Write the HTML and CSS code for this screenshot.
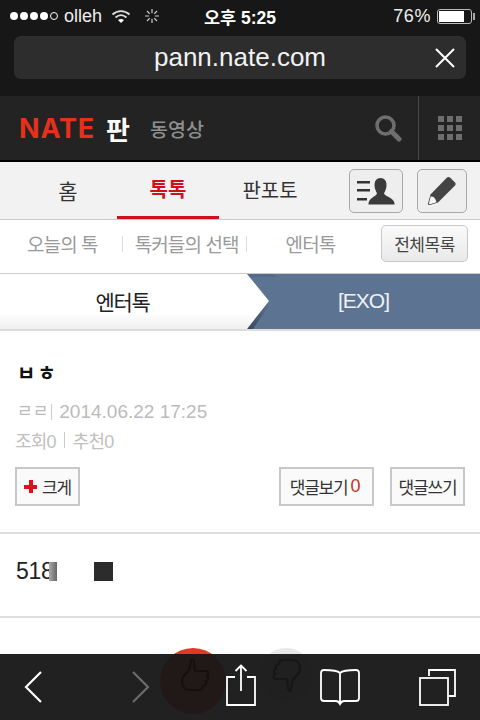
FILE: index.html
```html
<!DOCTYPE html>
<html lang="ko">
<head>
    <meta charset="UTF-8">
    <meta name="viewport" content="width=device-width, initial-scale=1.0">
    <title>pann.nate.com</title>
    <link rel="stylesheet" href="styles.css">
</head>
<body>
    <div class="phone">
        <!-- Safari top -->
        <div class="browser-top">
            <div class="status-bar">
                <div class="status-left">
                    <span class="dots"><i></i><i></i><i></i><i></i><i class="off"></i></span>
                    <span class="carrier">olleh</span>
                    <svg class="wifi" width="20" height="15" viewBox="0 0 20 15">
                        <path d="M1.5 5.5C6.5 1 13.500 1 18.500 5.500" fill="none" stroke="#ddd" stroke-width="1.800"/>
                        <path d="M4.500 8.500C8 5.500 12 5.500 15.500 8.500" fill="none" stroke="#ddd" stroke-width="1.800"/>
                        <path d="M7 11C9 9.500 11 9.500 13 11L10 14Z" fill="#fff"/>
                    </svg>
                    <svg class="spinner" width="16" height="16" viewBox="0 0 16 16" stroke="#ccc" stroke-width="1.200">
                        <path d="M8 1V5M8 11V15M1 8H5M11 8H15M3 3L5.800 5.800M10.200 10.200L13 13M13 3L10.200 5.800M5.800 10.200L3 13"/>
                    </svg>
                </div>
                <div class="clock">오후 5:25</div>
                <div class="status-right">
                    <span>76%</span>
                    <span class="battery"><b></b></span>
                </div>
            </div>
            <div class="url-bar">
                <span>pann.nate.com</span>
                <svg class="url-close" width="22" height="22" viewBox="0 0 22 22">
                    <path d="M2 2L20 20M20 2L2 20" stroke="#fff" stroke-width="2"/>
                </svg>
            </div>
        </div>

        <!-- Site header -->
        <header class="site-header">
            <div class="logo">NATE</div>
            <div class="logo-pann">판</div>
            <div class="logo-sub">동영상</div>
            <svg class="search" width="28" height="28" viewBox="0 0 28 28">
                <circle cx="11.500" cy="11.500" r="8.500" fill="none" stroke="#6e6e6e" stroke-width="3.600"/>
                <path d="M17.500 17.500L25 25" stroke="#6e6e6e" stroke-width="5" stroke-linecap="round"/>
            </svg>
            <div class="apps">
                <div class="apps-grid"><i></i><i></i><i></i><i></i><i></i><i></i><i></i><i></i><i></i></div>
            </div>
        </header>

        <!-- Main tabs -->
        <nav class="tabs">
            <a class="tab">홈</a>
            <a class="tab active">톡톡</a>
            <a class="tab">판포토</a>
            <button class="icon-btn profile-btn">
                <svg width="40" height="32" viewBox="0 0 40 32">
                    <path d="M1 6H14V8.500H1ZM1 14H14V16.500H1ZM1 23H11V25.500H1Z" fill="#333"/>
                    <path d="M24.500 3C28.500 3 30.500 6 30.500 10C30.500 14 29 16 28 18.500C29 21.500 37 22 38.500 28V29.500H12.500V28C14 22 20 21.500 21 18.500C20 16 18.500 14 18.500 10C18.500 6 20.500 3 24.500 3Z" fill="#3a3a3a"/>
                </svg>
            </button>
            <button class="icon-btn pencil-btn">
                <svg width="30" height="30" viewBox="0 0 30 30">
                    <path d="M20 1.500Q21.500 0.500 23 1.500L28 6.500Q29.500 8 28 9.500L11 26.500L3 29Q0.800 29.500 1 27.500L3.500 18.500Z" fill="#444"/>
                    <path d="M3.700 20.500Q8 20 9.500 26.200L3 28.200Q1.700 28.300 2 27Z" fill="#f4f4f4"/>
                </svg>
            </button>
        </nav>

        <!-- Sub nav -->
        <nav class="subnav">
            <a class="sub-item sub-today">오늘의 톡</a>
            <span class="sub-sep"></span>
            <a class="sub-item sub-pick">톡커들의 선택</a>
            <span class="sub-sep"></span>
            <a class="sub-item sub-enter">엔터톡</a>
            <button class="all-btn">전체목록</button>
        </nav>

        <!-- Breadcrumb -->
        <div class="crumbs">
            <div class="crumb-first">엔터톡</div>
            <div class="crumb-last">[EXO]</div>
            <svg class="crumb-arrow" width="32" height="55" viewBox="0 0 32 55">
                <defs>
                    <linearGradient id="arrowFill" x1="0" y1="0" x2="0" y2="1">
                        <stop offset="0.7" stop-color="#fff"/>
                        <stop offset="1" stop-color="#efefef"/>
                    </linearGradient>
                    <linearGradient id="arrowShade" x1="0" y1="1" x2="1" y2="0.400">
                        <stop offset="0" stop-color="#24303f" stop-opacity="0.7"/>
                        <stop offset="1" stop-color="#24303f" stop-opacity="0"/>
                    </linearGradient>
                </defs>
                <path d="M22 27L0 55H6L25 28Z" fill="url(#arrowShade)"/>
                <path d="M0 0H26L30 3H4ZM4 0L22 27" fill="#4e647f" opacity="0.6"/>
                <path d="M0 0L22 27L0 55Z" fill="url(#arrowFill)"/>
            </svg>
        </div>

        <!-- Post -->
        <main class="post">
            <section class="post-head">
                <h1 class="post-title">ㅂㅎ</h1>
                <p class="post-meta"><span class="author">ㄹㄹ</span><span class="bar"></span><span class="date">2014.06.22 17:25</span></p>
                <p class="post-count"><span>조회0</span><span class="bar"></span><span>추천0</span></p>
                <div class="post-actions">
                    <button class="act-btn big-btn"><span class="plus"></span>크게</button>
                    <button class="act-btn view-btn">댓글보기<em>0</em></button>
                    <button class="act-btn write-btn">댓글쓰기</button>
                </div>
            </section>
            <section class="post-body">
                <span class="num">518</span><span class="broken"></span><span class="square"></span>
            </section>
        </main>

        <!-- Vote buttons, mostly under the toolbar -->
        <div class="vote vote-up"></div>
        <div class="vote vote-down"></div>

        <!-- Safari bottom -->
        <footer class="toolbar">
            <svg class="tool" width="24" height="36" viewBox="0 0 24 36">
                <path d="M20 3L5 18L20 33" fill="none" stroke="#fff" stroke-width="2.200"/>
            </svg>
            <svg class="tool" width="24" height="36" viewBox="0 0 24 36">
                <path d="M4 3L19 18L4 33" fill="none" stroke="#6b6b6b" stroke-width="2.200"/>
            </svg>
            <svg class="tool tool-share" width="30" height="42" viewBox="0 0 30 42">
                <path d="M9 13H1V41H29V13H21M15 27V2M9.500 7L15 1.500L20.500 7" fill="none" stroke="#fff" stroke-width="1.800"/>
            </svg>
            <svg class="tool" width="40" height="38" viewBox="0 0 40 38">
                <path d="M20 5C17 2 8 2 4 2Q1 2 1 5V30Q1 33 4 33H16C18 33 19 34 20 36C21 34 22 33 24 33H36Q39 33 39 30V5Q39 2 36 2C32 2 23 2 20 5ZM20 5V36" fill="none" stroke="#fff" stroke-width="1.800"/>
            </svg>
            <svg class="tool" width="38" height="38" viewBox="0 0 38 38">
                <path d="M10 8V2H36V28H30" fill="none" stroke="#fff" stroke-width="1.800"/>
                <rect x="1" y="10" width="28" height="27" fill="none" stroke="#fff" stroke-width="1.800"/>
            </svg>
            <!-- thumbs showing faintly through the bar -->
            <svg class="thumb thumb-up" width="30" height="36" viewBox="0 0 30 36">
                <path d="M12 2C15 2 14 10 15 14H26C29 14 29 18 27 19C29 21 28 24 26 24C27 27 25 29 23 29C23 32 21 33 19 33H9C5 33 2 30 2 24C2 18 7 17 9 13C11 9 10 2 12 2Z" fill="none" stroke="#120a0a" stroke-width="2.200"/>
            </svg>
            <svg class="thumb thumb-down" width="30" height="36" viewBox="0 0 30 36">
                <path d="M18 34C15 34 16 26 15 22H4C1 22 1 18 3 17C1 15 2 12 4 12C3 9 5 7 7 7C7 4 9 3 11 3H21C25 3 28 6 28 12C28 18 23 19 21 23C19 27 20 34 18 34Z" fill="none" stroke="#101010" stroke-width="2.200"/>
            </svg>
        </footer>
    </div>
</body>
</html>
```

FILE: styles.css
```css
/* Global */
* {
    box-sizing: border-box;
}

body {
    margin: 0;
    background: #fff;
    font-family: "Liberation Sans", "Noto Sans CJK KR", sans-serif;
    color: #333;
}

button {
    font-family: inherit;
    padding: 0;
}

.phone {
    position: relative;
    width: 480px;
    height: 720px;
    overflow: hidden;
    display: flex;
    flex-direction: column;
}

/* Browser top */
.browser-top {
    height: 96px;
    flex: none;
    background: #171717;
    color: #fff;
}

.status-bar {
    height: 32px;
    padding: 0 8px 0 10px;
    display: flex;
    align-items: center;
    position: relative;
    font-size: 17px;
}

.status-left {
    display: flex;
    align-items: center;
}

.dots {
    display: flex;
    gap: 2px;
}

.dots i {
    width: 8px;
    height: 8px;
    border-radius: 50%;
    background: #fff;
}

.dots i.off {
    background: none;
    border: 1px solid #fff;
}

.carrier {
    margin-left: 6px;
    color: #eee;
    font-size: 18px;
}

.wifi {
    margin-left: 9px;
}

.spinner {
    margin-left: 13px;
}

.clock {
    position: absolute;
    left: 204px;
    font-weight: bold;
    font-size: 17.500px;
}

.status-right {
    margin-left: auto;
    display: flex;
    align-items: center;
    gap: 6px;
    font-size: 18px;
    letter-spacing: 0.6px;
    color: #eee;
}

.battery {
    position: relative;
    width: 35px;
    height: 15px;
    border: 1px solid #bbb;
    border-radius: 3px;
    padding: 1px;
}

.battery b {
    display: block;
    width: 25px;
    height: 11px;
    background: #fff;
}

.battery::after {
    content: "";
    position: absolute;
    right: -4px;
    top: 3px;
    width: 2px;
    height: 7px;
    background: #aaa;
}

.url-bar {
    position: relative;
    margin: 4px 14px 0;
    height: 43px;
    background: #2d2d2d;
    border-radius: 7px;
    display: flex;
    align-items: center;
    justify-content: center;
    font-size: 26px;
    color: #f2f2f2;
}

.url-close {
    position: absolute;
    right: 10px;
    top: 11px;
}

/* Site header */
.site-header {
    height: 66px;
    flex: none;
    background: #232323;
    border-bottom: 2px solid #000;
    display: flex;
    align-items: center;
    padding-left: 19px;
}

.logo {
    width: 87px;
    font-family: "Inter", sans-serif;
    font-weight: 700;
    font-size: 27px;
    color: #e6301a;
    letter-spacing: 0.8px;
}

.logo-pann {
    width: 44px;
    font-weight: bold;
    font-size: 26px;
    color: #fff;
}

.logo-sub {
    font-weight: 500;
    font-size: 19.500px;
    color: #8f8f8f;
}

.search {
    margin-left: auto;
    margin-right: 16px;
}

.apps {
    width: 62px;
    height: 100%;
    border-left: 1px solid #484848;
    display: flex;
    align-items: center;
    justify-content: center;
}

.apps-grid {
    display: grid;
    grid-template-columns: repeat(3, 6px);
    gap: 3px;
}

.apps-grid i {
    height: 6px;
    background: #6e6e6e;
}

/* Tabs */
.tabs {
    height: 58px;
    flex: none;
    background: #f2f2f2;
    border-bottom: 1px solid #c9c9c9;
    display: flex;
    align-items: center;
    position: relative;
}

.tab {
    width: 102px;
    height: 100%;
    display: flex;
    align-items: center;
    justify-content: center;
    font-size: 20px;
    color: #333;
    padding-bottom: 2px;
}

.tab:first-child {
    margin-left: 17px;
    margin-right: -2px;
    font-size: 21px;
}

.tab.active {
    color: #d0111b;
    font-weight: bold;
    border-bottom: 3px solid #d0111b;
}

.icon-btn {
    height: 44px;
    background: #eee;
    border: 1px solid #a8a8a8;
    border-radius: 5px;
    display: flex;
    align-items: center;
    justify-content: center;
}

.profile-btn {
    width: 54px;
    margin-left: 28px;
}

.pencil-btn {
    width: 50px;
    margin-left: 14px;
}

/* Sub nav */
.subnav {
    height: 54px;
    flex: none;
    background: #fff;
    border-bottom: 1px solid #ccc;
    display: flex;
    align-items: center;
    position: relative;
    padding-bottom: 6px;
}

.sub-item {
    font-size: 19px;
    color: #9a9a9a;
    letter-spacing: -0.9px;
}

.sub-today {
    margin-left: 27px;
}

.sub-sep {
    width: 1px;
    height: 16px;
    background: #ddd;
}

.sub-today + .sub-sep {
    margin-left: 24px;
    margin-right: 12px;
}

.sub-pick + .sub-sep {
    margin-left: 7px;
    margin-right: 39px;
}

.all-btn {
    margin-left: auto;
    margin-right: 12px;
    width: 87px;
    height: 37px;
    border: 1px solid #c8c8c8;
    border-radius: 5px;
    background: linear-gradient(#fafafa, #e9e9e9);
    font-size: 17px;
    color: #444;
    letter-spacing: -0.5px;
}

/* Breadcrumb */
.crumbs {
    height: 57px;
    flex: none;
    position: relative;
    display: flex;
    border-bottom: 2px solid #ddd;
}

.crumb-first {
    width: 247px;
    background: linear-gradient(#fff 70%, #efefef);
    display: flex;
    align-items: center;
    justify-content: center;
    padding: 0 2px 2px 0;
    font-size: 21px;
    letter-spacing: -1.300px;
    color: #222;
}

.crumb-last {
    flex: 1;
    background: #5c7391;
    display: flex;
    align-items: center;
    justify-content: center;
    padding-bottom: 2px;
    font-size: 21px;
    letter-spacing: -1px;
    color: #eef2f6;
}

.crumb-arrow {
    position: absolute;
    left: 247px;
    top: 0;
}

/* Post */
.post {
    flex: 1;
    background: #fff;
}

.post-head {
    height: 203px;
    padding: 30px 15px 0;
    border-bottom: 2px solid #ddd;
}

.post-title {
    margin: 0 0 0 2px;
    font-size: 20px;
    line-height: 26px;
    letter-spacing: 2px;
    color: #111;
}

.post-meta,
.post-count {
    margin: 0;
    color: #bbb;
    display: flex;
    align-items: center;
}

.post-meta {
    margin: 11px 0 0 2px;
    font-size: 19px;
    line-height: 28px;
}

.post-count {
    height: 30px;
    font-size: 18px;
    letter-spacing: -0.8px;
    margin-top: -1px;
    color: #c0c0c0;
}

.bar {
    width: 1px;
    height: 16px;
    background: #ccc;
    margin: 0 8px;
}

.post-meta .bar {
    margin: 0 3px;
}

.author {
    font-size: 17px;
}

.date {
    margin-left: 4px;
}

.post-actions {
    margin-top: 12px;
    display: flex;
}

.act-btn {
    height: 39px;
    background: #fafafa;
    border: 2px solid #c8c8c8;
    font-size: 17px;
    color: #333;
    letter-spacing: -1.200px;
    display: flex;
    align-items: center;
    justify-content: center;
}

.act-btn em {
    font-style: normal;
    font-size: 18px;
    color: #c8301c;
    margin-left: 3px;
}

.big-btn {
    width: 65px;
}

.view-btn {
    width: 95px;
    margin-left: auto;
    padding-right: 4px;
}

.write-btn {
    width: 75px;
    margin-left: 16px;
}

.plus {
    position: relative;
    width: 13px;
    height: 13px;
    margin-right: 5px;
    background: linear-gradient(#e0101a, #e0101a) center / 13px 4px no-repeat,
        linear-gradient(#e0101a, #e0101a) center / 4px 13px no-repeat;
}

.post-body {
    height: 84px;
    padding: 0 16px 8px;
    border-bottom: 2px solid #ddd;
    display: flex;
    align-items: center;
}

.num {
    font-size: 23px;
    letter-spacing: -0.3px;
    color: #222;
}

.broken {
    width: 8px;
    height: 19px;
    margin-left: -4px;
    background: linear-gradient(90deg, #aaa, #666);
}

.square {
    width: 19px;
    height: 19px;
    margin-left: 37px;
    background: #2c2c2c;
}

/* Vote circles under the translucent toolbar */
.vote {
    position: absolute;
    top: 648px;
    width: 66px;
    height: 66px;
    border-radius: 50%;
}

.vote-up {
    left: 160px;
    background: #e2382a;
}

.vote-down {
    left: 259px;
    width: 54px;
    height: 54px;
    background: #e8e8e8;
}

/* Browser bottom */
.toolbar {
    position: absolute;
    left: 0;
    right: 0;
    bottom: 0;
    height: 66px;
    background: rgba(24, 24, 24, 0.96);
    display: flex;
    align-items: center;
}

.tool {
    position: relative;
    z-index: 1;
}

.tool:nth-child(1) {
    margin-left: 21px;
}

.tool:nth-child(2) {
    margin-left: 84px;
}

.tool:nth-child(3) {
    margin-left: 73px;
}

.tool:nth-child(4) {
    margin-left: 64px;
}

.tool:nth-child(5) {
    margin-left: 59px;
}

.tool-share {
    margin-bottom: 4px;
}

.thumb {
    position: absolute;
    top: 3px;
    opacity: 0.6;
}

.thumb-up {
    left: 180px;
}

.thumb-down {
    left: 272px;
}
```
